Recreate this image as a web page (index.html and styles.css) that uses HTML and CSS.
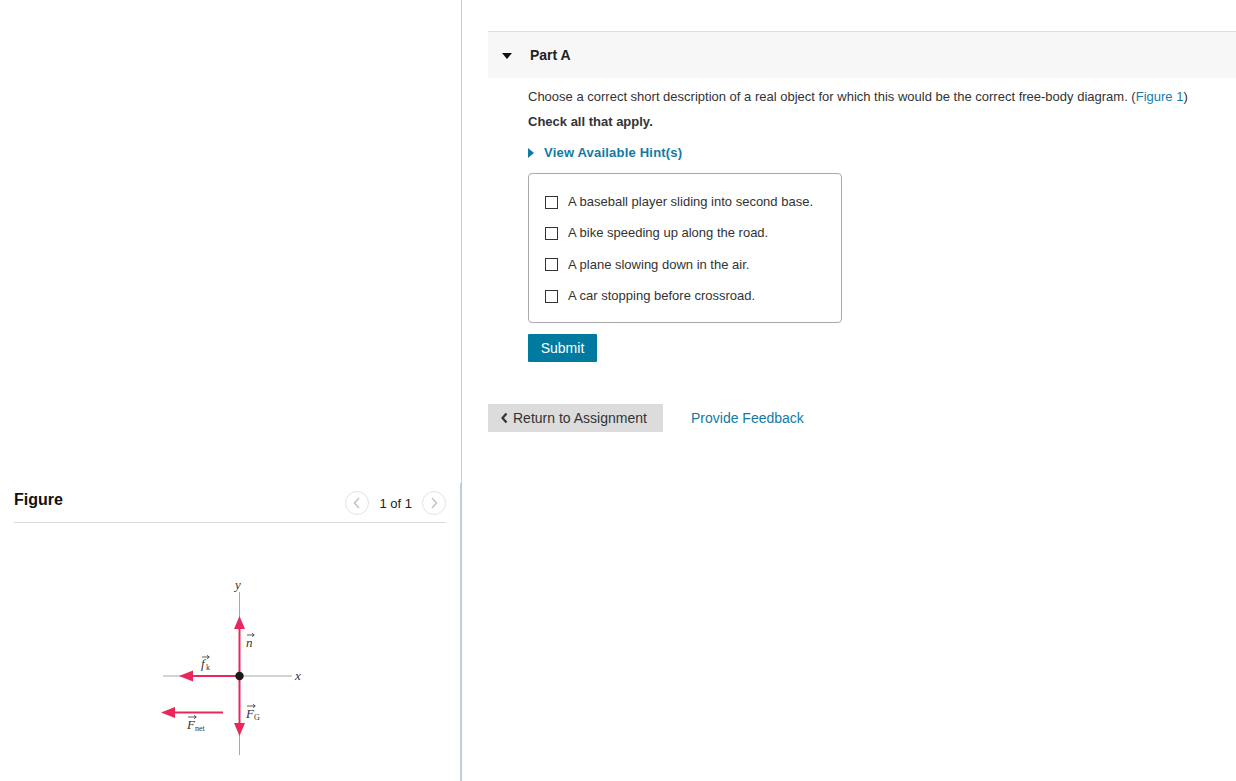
FILE: index.html
```html
<!DOCTYPE html>
<html>
<head>
<meta charset="utf-8">
<link rel="stylesheet" href="styles.css">
</head>
<body>
<div class="page">
  <aside class="left">
    <div class="left-top"></div>
    <section class="figure-panel">
      <div class="figure-head">
        <h2 class="figure-title">Figure</h2>
        <div class="pager">
          <span class="pager-btn">
            <svg width="10" height="12" viewBox="0 0 10 12"><path d="M7 1 L2.5 6 L7 11" fill="none" stroke="#c4c4c4" stroke-width="1.6"/></svg>
          </span>
          <span class="pager-text">1 of 1</span>
          <span class="pager-btn">
            <svg width="10" height="12" viewBox="0 0 10 12"><path d="M3 1 L7.5 6 L3 11" fill="none" stroke="#c4c4c4" stroke-width="1.6"/></svg>
          </span>
        </div>
      </div>
      <div class="diagram">
        <svg width="165" height="190" viewBox="0 0 165 190">
          <line x1="89.5" y1="22" x2="89.5" y2="185" stroke="#a8a8a8" stroke-width="1"/>
          <line x1="13" y1="106" x2="142" y2="106" stroke="#a8a8a8" stroke-width="1"/>
          <text x="88" y="19" class="lbl" text-anchor="middle">y</text>
          <text x="145" y="110" class="lbl">x</text>
          <!-- n -->
          <line x1="89.5" y1="106" x2="89.5" y2="56" stroke="#e8285c" stroke-width="2"/>
          <polygon points="89.5,46 84,59 95,59" fill="#e8285c"/>
          <!-- FG -->
          <line x1="89.5" y1="106" x2="89.5" y2="156" stroke="#e8285c" stroke-width="2"/>
          <polygon points="89.5,166 84,153 95,153" fill="#e8285c"/>
          <!-- fk -->
          <line x1="89.5" y1="106" x2="40" y2="106" stroke="#e8285c" stroke-width="2"/>
          <polygon points="29,106 43,100.5 43,111.5" fill="#e8285c"/>
          <!-- Fnet -->
          <line x1="73" y1="142.5" x2="22" y2="142.5" stroke="#e8285c" stroke-width="2"/>
          <polygon points="11,142.5 25,137 25,148" fill="#e8285c"/>
          <circle cx="89.5" cy="106" r="4.2" fill="#1a1a1a"/>
          <!-- labels -->
          <text x="96" y="77" class="lbl">n</text>
          <path d="M97 65 H104 M102 63.3 L104.3 65 L102 66.7" fill="none" stroke="#333" stroke-width="0.8"/>
          <text x="51" y="98" class="lbl">f</text>
          <text x="56" y="100" class="sub">k</text>
          <path d="M52 87 H59 M57 85.3 L59.3 87 L57 88.7" fill="none" stroke="#333" stroke-width="0.8"/>
          <text x="96" y="148" class="lbl">F</text>
          <text x="104" y="150" class="sub">G</text>
          <path d="M97 136 H105 M103 134.3 L105.3 136 L103 137.7" fill="none" stroke="#333" stroke-width="0.8"/>
          <text x="37" y="159" class="lbl">F</text>
          <text x="45" y="161" class="sub">net</text>
          <path d="M38 147 H46 M44 145.3 L46.3 147 L44 148.7" fill="none" stroke="#333" stroke-width="0.8"/>
        </svg>
      </div>
    </section>
  </aside>
  <main class="right">
    <div class="part-head">
      <span class="caret-down"></span>
      <span class="part-title">Part A</span>
    </div>
    <div class="part-body">
      <p class="question">Choose a correct short description of a real object for which this would be the correct free-body diagram. (<a class="link" href="#">Figure 1</a>)</p>
      <p class="instr">Check all that apply.</p>
      <a class="hint" href="#"><span class="caret-right"></span>View Available Hint(s)</a>
      <div class="options">
        <label class="option"><span class="box"></span>A baseball player sliding into second base.</label>
        <label class="option"><span class="box"></span>A bike speeding up along the road.</label>
        <label class="option"><span class="box"></span>A plane slowing down in the air.</label>
        <label class="option"><span class="box"></span>A car stopping before crossroad.</label>
      </div>
      <button class="submit">Submit</button>
    </div>
    <div class="nav">
      <button class="return">
        <svg width="9" height="12" viewBox="0 0 9 12"><path d="M6.5 1.5 L2.5 6 L6.5 10.5" fill="none" stroke="#333" stroke-width="2.2"/></svg>
        Return to Assignment
      </button>
      <a class="feedback" href="#">Provide Feedback</a>
    </div>
  </main>
</div>
</body>
</html>
```

FILE: styles.css
```css
html, body {
  margin: 0;
  padding: 0;
  background: #fff;
}
body {
  font-family: "Liberation Sans", Arial, sans-serif;
  color: #333;
  width: 1236px;
  height: 781px;
  overflow: hidden;
}
.page {
  display: flex;
  height: 781px;
}
.left {
  width: 462px;
  flex: none;
  display: flex;
  flex-direction: column;
}
.left-top {
  height: 483px;
  flex: none;
  border-right: 1px solid #c6ccd6;
  box-sizing: border-box;
  width: 462px;
}
.figure-panel {
  flex: 1;
  border-right: 2px solid #bccee0;
  box-sizing: border-box;
  width: 462px;
  padding: 0 14px 0 14px;
}
.figure-head {
  display: flex;
  align-items: center;
  justify-content: space-between;
  height: 38px;
  border-bottom: 1px solid #dcdcdc;
  padding-top: 1px;
}
.figure-title {
  margin: 0;
  font-size: 16px;
  font-weight: bold;
  color: #111;
  position: relative;
  top: -3px;
}
.pager {
  display: flex;
  align-items: center;
  gap: 10px;
}
.pager-btn {
  width: 22px;
  height: 22px;
  border: 1px solid #e2e2e2;
  border-radius: 50%;
  display: flex;
  align-items: center;
  justify-content: center;
}
.pager-text {
  font-size: 13px;
  color: #222;
}
.diagram {
  padding-top: 47px;
  padding-left: 136px;
}
.diagram svg {
  display: block;
}
.lbl {
  font-family: "Liberation Serif", "Times New Roman", serif;
  font-style: italic;
  font-size: 13px;
  fill: #333;
}
.sub {
  font-family: "Liberation Serif", "Times New Roman", serif;
  font-size: 8px;
  fill: #333;
}
.right {
  flex: 1;
  padding-left: 26px;
  padding-top: 31px;
}
.part-head {
  height: 46px;
  background: #f7f7f7;
  border-top: 1px solid #dedede;
  display: flex;
  align-items: center;
}
.caret-down {
  width: 0;
  height: 0;
  border-left: 5px solid transparent;
  border-right: 5px solid transparent;
  border-top: 6px solid #111;
  margin-left: 14px;
  margin-right: 18px;
  margin-top: 1px;
}
.part-title {
  font-size: 14px;
  font-weight: bold;
  color: #222;
}
.part-body {
  padding-left: 40px;
  padding-top: 11px;
}
.question {
  margin: 0;
  font-size: 13px;
  line-height: 16px;
  color: #333;
}
.link {
  color: #1a7aa8;
  text-decoration: none;
}
.instr {
  margin: 9px 0 0 0;
  font-size: 13px;
  line-height: 16px;
  font-weight: bold;
  color: #333;
}
.hint {
  display: flex;
  align-items: center;
  margin-top: 15px;
  font-size: 13px;
  line-height: 16px;
  font-weight: bold;
  color: #127a9f;
  text-decoration: none;
  letter-spacing: 0.2px;
}
.caret-right {
  width: 0;
  height: 0;
  border-top: 5px solid transparent;
  border-bottom: 5px solid transparent;
  border-left: 6px solid #127a9f;
  margin-right: 10px;
}
.options {
  margin-top: 12px;
  width: 314px;
  height: 150px;
  box-sizing: border-box;
  border: 1px solid #aaaaaa;
  border-radius: 4px;
  padding: 20px 0 0 16px;
  display: flex;
  flex-direction: column;
  gap: 15.4px;
}
.option {
  display: flex;
  align-items: center;
  font-size: 13px;
  line-height: 16px;
  color: #333;
}
.box {
  width: 11px;
  height: 11px;
  border: 1px solid #333;
  margin-right: 10px;
  flex: none;
}
.submit {
  margin-top: 11px;
  display: block;
  width: 69px;
  height: 28px;
  background: #007b9f;
  color: #fff;
  border: none;
  border-radius: 1px;
  font-family: "Liberation Sans", Arial, sans-serif;
  font-size: 14px;
  padding: 0;
}
.nav {
  display: flex;
  align-items: center;
  margin-top: 42px;
  gap: 28px;
}
.return {
  display: flex;
  align-items: center;
  gap: 4px;
  height: 28px;
  width: 175px;
  background: #dcdcdc;
  border: none;
  padding: 0 0 0 12px;
  font-family: "Liberation Sans", Arial, sans-serif;
  font-size: 14px;
  color: #333;
}
.feedback {
  font-size: 14px;
  color: #127aa5;
  text-decoration: none;
}
```
